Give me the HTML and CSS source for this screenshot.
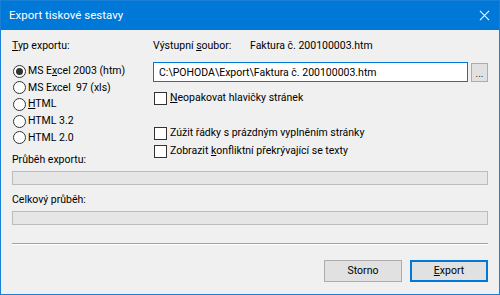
FILE: index.html
```html
<!DOCTYPE html>
<html lang="cs">
<head>
    <meta charset="UTF-8">
    <title>Export tiskové sestavy</title>
    <link rel="stylesheet" href="styles.css">
</head>
<body>
    <div class="window">
        <div class="titlebar">
            <span class="title">Export tiskové sestavy</span>
            <svg class="close" width="12" height="12" viewBox="0 0 12 12">
                <path d="M1 1 L11 11 M11 1 L1 11" stroke="#fff" stroke-width="1.1" fill="none"/>
            </svg>
        </div>

        <div class="content">
            <div class="top">
                <!-- Left: export type -->
                <div class="left">
                    <div class="label"><u>T</u>yp exportu:</div>
                    <div class="radios">
                        <div class="radio checked"><span class="dot"></span><span>MS E<u>x</u>cel 2003 (htm)</span></div>
                        <div class="radio"><span class="dot"></span><span>MS Excel&nbsp; 97 (xls)</span></div>
                        <div class="radio"><span class="dot"></span><span><u>H</u>TML</span></div>
                        <div class="radio"><span class="dot"></span><span>HTML 3.2</span></div>
                        <div class="radio"><span class="dot"></span><span>HTML 2.0</span></div>
                    </div>
                    <div class="label progress-label">Průběh exportu:</div>
                </div>

                <!-- Right: output file + options -->
                <div class="right">
                    <div class="file-row">
                        <span class="file-label">Výstupní <u>s</u>oubor:</span>
                        <span>Faktura č. 200100003.htm</span>
                    </div>
                    <div class="path-row">
                        <div class="path-input">C:\POHODA\Export\Faktura č. 200100003.htm</div>
                        <button class="browse">...</button>
                    </div>
                    <div class="check first"><span class="box"></span><span><u>N</u>eopakovat hlavičky stránek</span></div>
                    <div class="check gap"><span class="box"></span><span>Zúžit řádky s prázdným vyplněním stránky</span></div>
                    <div class="check"><span class="box"></span><span>Zobrazit <u>k</u>onfliktní překrývající se texty</span></div>
                </div>
            </div>

            <div class="bar bar-first"></div>
            <div class="label total-label">Celkový průběh:</div>
            <div class="bar"></div>

            <div class="separator"></div>

            <div class="buttons">
                <button class="btn">Storno</button>
                <button class="btn default"><u>E</u>xport</button>
            </div>
        </div>
    </div>
</body>
</html>
```

FILE: styles.css
```css
* {
    margin: 0;
    padding: 0;
    box-sizing: border-box;
}

body {
    font-family: 'Roboto', 'Noto Sans', sans-serif;
    font-size: 10.5px;
    line-height: 16px;
    color: #000;
    background: #f0f0f0;
}

u {
    text-decoration-thickness: 1px;
    text-underline-offset: 1px;
}

/* Window frame */
.window {
    width: 500px;
    height: 295px;
    border: 1px solid #1a7fd6;
    background: #f0f0f0;
}

.titlebar {
    height: 29px;
    background: #0078d7;
    color: #fff;
    display: flex;
    align-items: center;
    justify-content: space-between;
    padding: 0 9px 1px 8px;
}

.title {
    font-size: 11.5px;
}

.close {
    width: 11px;
    height: 11px;
}

.content {
    padding: 8px 11px 0 11px;
}

/* Top area */
.top {
    display: grid;
    grid-template-columns: 141px 1fr;
}

.radios {
    margin-top: 9px;
}

.radio {
    height: 16.6px;
    display: flex;
    align-items: center;
    padding-left: 1px;
}

.radio .dot {
    width: 13px;
    height: 13px;
    border: 1px solid #333;
    border-radius: 50%;
    background: #fff;
    margin-right: 2px;
    display: flex;
    align-items: center;
    justify-content: center;
}

.radio.checked .dot::after {
    content: "";
    width: 7px;
    height: 7px;
    border-radius: 50%;
    background: #333;
}

.progress-label {
    margin-top: 6px;
}

.file-row {
    display: flex;
}

.file-label {
    width: 97px;
}

.path-row {
    display: flex;
    align-items: center;
    margin-top: 8px;
}

.path-input {
    width: 315px;
    height: 20px;
    border: 1px solid #0078d7;
    background: #fff;
    padding: 1px 5px;
    line-height: 17px;
    white-space: nowrap;
}

.browse {
    width: 17px;
    height: 19px;
    margin-left: 3px;
    background: #e1e1e1;
    border: 1px solid #adadad;
    font-family: inherit;
    font-size: 10px;
    line-height: 14px;
    color: #333;
    padding-top: 3px;
}

.check {
    height: 18px;
    display: flex;
    align-items: center;
    padding-left: 1px;
}

.check.first {
    margin-top: 7px;
}

.check.gap {
    margin-top: 17px;
}

.check .box {
    width: 13px;
    height: 13px;
    border: 1px solid #333;
    background: #fff;
    margin-right: 3px;
}

/* Progress bars */
.bar {
    height: 14px;
    background: #e6e6e6;
    border: 1px solid #bcbcbc;
}

.bar-first {
    margin-top: 3px;
}

.total-label {
    margin-top: 7px;
    margin-bottom: 3px;
}

.separator {
    margin-top: 18px;
    height: 2px;
    border-top: 1px solid #a0a0a0;
    border-bottom: 1px solid #fff;
}

/* Buttons */
.buttons {
    display: flex;
    justify-content: flex-end;
    gap: 8px;
    margin-top: 15px;
}

.btn {
    width: 78px;
    height: 22px;
    background: #e1e1e1;
    border: 1px solid #adadad;
    font-family: inherit;
    font-size: 10.5px;
    color: #000;
}

.btn.default {
    border: 2px solid #0078d7;
}
```
